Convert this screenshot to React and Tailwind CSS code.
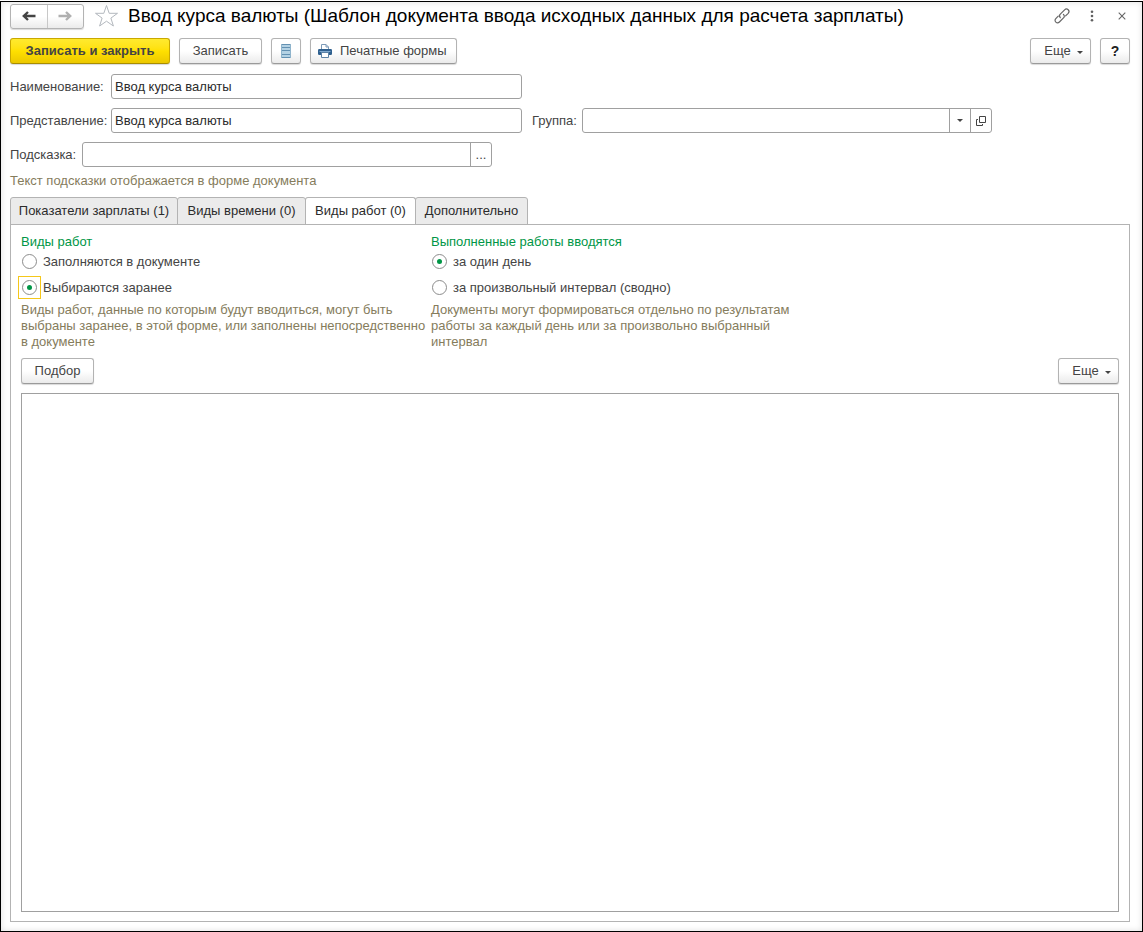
import { useState } from "react";

const BUTTON =
  "flex h-[26px] items-center rounded-[3px] border border-[#b3b3b3] border-b-[#9a9a9a] bg-linear-to-b from-white from-50% to-[#ebebeb] text-[#444444] shadow-[0_1px_1px_rgba(0,0,0,0.15)]";
const FIELD = "flex h-[25px] rounded-[3px] border border-[#a0a0a0] bg-white";
const INPUT = "min-w-0 flex-1 rounded-[3px] bg-transparent px-[3px] text-[#2b2b2b] outline-none";
const INNER_BUTTON = "flex w-[21px] items-center justify-center border-l border-[#a0a0a0] text-[#444444]";

function ArrowLeft({ className }) {
  return (
    <svg width="14" height="10" viewBox="0 0 14 10" className={className} aria-hidden="true">
      <path d="M13.5 5H3M6 1L1.8 5L6 9" fill="none" stroke="currentColor" strokeWidth="2.4" />
    </svg>
  );
}

function Caret({ className }) {
  return (
    <svg width="6" height="3" viewBox="0 0 6 3" className={className} aria-hidden="true">
      <path d="M0 0h6L3 3z" fill="currentColor" />
    </svg>
  );
}

function MoreButton() {
  return (
    <button type="button" className={`${BUTTON} w-[61px] justify-center gap-[6px] pl-[6px]`}>
      Еще
      <Caret className="mt-[2px]" />
    </button>
  );
}

function Radio({ name, label, checked, focused, onChange }) {
  return (
    <label className="mb-[3px] -ml-[3px] flex items-center gap-[2px]">
      <span
        className={`flex size-[23px] items-center justify-center border ${
          focused ? "border-[#f5c71a]" : "border-transparent"
        }`}
      >
        <input
          type="radio"
          name={name}
          checked={checked}
          onChange={onChange}
          className="flex size-[15px] appearance-none items-center justify-center rounded-full border border-[#8c8c8c] bg-white outline-none before:size-[5px] before:rounded-full checked:before:bg-[#009646]"
        />
      </span>
      {label}
    </label>
  );
}

function RadioGroup({ title, name, options, initial, focused, hint, className }) {
  const [value, setValue] = useState(initial);
  return (
    <fieldset className={className}>
      <legend className="text-[#009646]">{title}</legend>
      {options.map((option, i) => (
        <Radio
          key={option}
          name={name}
          label={option}
          checked={value === i}
          focused={focused && value === i}
          onChange={() => setValue(i)}
        />
      ))}
      <p className="text-[#857c5c]">{hint}</p>
    </fieldset>
  );
}

const TABS = [
  { label: "Показатели зарплаты (1)", width: "w-[168px]" },
  { label: "Виды времени (0)", width: "w-[129px]" },
  { label: "Виды работ (0)", width: "w-[111px]" },
  { label: "Дополнительно", width: "w-[113px]" },
];

export default function App() {
  const [tab, setTab] = useState(2);
  return (
    <div className="min-h-screen bg-white pt-px font-['Liberation_Sans',Arial,sans-serif] text-[13px] leading-4 text-[#444444]">
      <main className="flex min-h-[calc(100vh-1px)] flex-col border border-black pt-px pr-3 pb-[9px] pl-[9px] shadow-[inset_0_0_6px_rgba(0,0,0,0.12)]">
        <header className="flex h-[26px] items-center">
          <div className="flex h-[25px] w-[74px] rounded-[3px] border border-[#b3b3b3] bg-linear-to-b from-white from-50% to-[#ebebeb] shadow-[0_1px_1px_rgba(0,0,0,0.15)]">
            <button type="button" aria-label="Назад" className="flex flex-1 items-center justify-center border-r border-[#c8c8c8]">
              <ArrowLeft />
            </button>
            <button type="button" aria-label="Вперед" className="flex flex-1 items-center justify-center text-[#b0b0b0]">
              <ArrowLeft className="rotate-180" />
            </button>
          </div>
          <button type="button" aria-label="Избранное" className="ml-[10px]">
            <svg width="25" height="24" viewBox="0 0 25 24" aria-hidden="true">
              <path
                d="M12.5 1.5L15.2 9.3H23.5L16.9 14.1L19.4 22L12.5 17.2L5.6 22L8.1 14.1L1.5 9.3H9.8Z"
                fill="white"
                stroke="#b3b8be"
              />
            </svg>
          </button>
          <h1 className="ml-[9px] flex-1 text-[19px] leading-6 text-black">
            Ввод курса валюты (Шаблон документа ввода исходных данных для расчета зарплаты)
          </h1>
          <button type="button" aria-label="Ссылка" className="mr-[19px]">
            <svg width="18" height="18" viewBox="0 0 18 18" fill="none" stroke="#666666" strokeWidth="1.2" strokeLinecap="round" aria-hidden="true">
              <path d="M7.3 10.7C6.2 9.5 6.2 8.2 7.3 7.1L11.6 2.8C14 .5 17.5 3.8 15.2 6.3L12.6 8.9M10.4 7.3C11.6 8.5 11.6 9.8 10.5 10.9L6.4 15C4 17.4.5 14 2.8 11.6L5.2 9.2" />
            </svg>
          </button>
          <button type="button" aria-label="Меню" className="mr-6">
            <svg width="4" height="12" viewBox="0 0 4 12" fill="#606060" aria-hidden="true">
              <circle cx="2" cy="1.7" r="1.3" />
              <circle cx="2" cy="6" r="1.3" />
              <circle cx="2" cy="10.3" r="1.3" />
            </svg>
          </button>
          <button type="button" aria-label="Закрыть" className="mr-1">
            <svg width="8" height="8" viewBox="0 0 8 8" stroke="#666666" strokeWidth="1.1" aria-hidden="true">
              <path d="M.7 .7L7.3 7.3M7.3 .7L.7 7.3" />
            </svg>
          </button>
        </header>

        <div className="mt-[9px] flex gap-[9px]">
          <button
            type="button"
            className="flex h-[26px] w-[160px] items-center justify-center rounded-[3px] border border-[#c9a800] border-b-[#a98d00] bg-linear-to-b from-[#ffea2e] via-[#ffe000] to-[#ecc800] font-bold text-[#444444] shadow-[0_1px_1px_rgba(0,0,0,0.15)]"
          >
            Записать и закрыть
          </button>
          <button type="button" className={`${BUTTON} w-[83px] justify-center`}>
            Записать
          </button>
          <button type="button" aria-label="Список" className={`${BUTTON} w-[30px] justify-center`}>
            <svg width="10" height="14" viewBox="0 0 10 14" aria-hidden="true">
              <path d="M0 0h10v14H0z" fill="#b4d2e4" />
              <path d="M0 .5h10M0 3.5h10M0 6.5h10M0 10.5h10M0 13.5h10" stroke="#6391b2" />
              <path d="M.5 0v14M9.5 0v14" stroke="#8fb4cc" />
            </svg>
          </button>
          <button type="button" className={`${BUTTON} w-[147px] gap-2 pl-[7px]`}>
            <svg width="14" height="14" viewBox="0 0 14 14" aria-hidden="true">
              <path d="M3.5 6V.5H8L10.5 3V6" fill="white" stroke="#7d9ab8" />
              <path d="M8 .5V3h2.5" fill="none" stroke="#7d9ab8" />
              <rect y="5" width="14" height="6" rx="1.2" fill="#2f608f" />
              <path d="M1.5 7.5h11" stroke="#7fa8cf" />
              <path d="M3.5 8.5h7v5h-7z" fill="white" stroke="#5d82a6" />
            </svg>
            Печатные формы
          </button>
          <div className="ml-auto flex gap-[9px]">
            <MoreButton />
            <button type="button" className={`${BUTTON} w-[30px] justify-center`}>
              <span className="text-sm font-bold text-[#222222]">?</span>
            </button>
          </div>
        </div>

        <div className="mt-[10px] flex items-center">
          <label htmlFor="name" className="w-[101px]">
            Наименование:
          </label>
          <div className={`${FIELD} w-[411px]`}>
            <input id="name" defaultValue="Ввод курса валюты" className={INPUT} />
          </div>
        </div>

        <div className="mt-[9px] flex items-center">
          <label htmlFor="view" className="w-[101px]">
            Представление:
          </label>
          <div className={`${FIELD} w-[411px]`}>
            <input id="view" defaultValue="Ввод курса валюты" className={INPUT} />
          </div>
          <label htmlFor="group" className="ml-[10px] w-[50px]">
            Группа:
          </label>
          <div className={`${FIELD} w-[410px]`}>
            <input id="group" className={INPUT} />
            <button type="button" aria-label="Выбрать" className={INNER_BUTTON}>
              <Caret />
            </button>
            <button type="button" aria-label="Открыть" className={INNER_BUTTON}>
              <svg width="10" height="10" viewBox="0 0 10 10" fill="none" stroke="currentColor" aria-hidden="true">
                <path d="M3.5 .5h6v6h-6zM2 3.5H.5v6h6V8" />
              </svg>
            </button>
          </div>
        </div>

        <div className="mt-[9px] flex items-center">
          <label htmlFor="tip" className="w-[72px]">
            Подсказка:
          </label>
          <div className={`${FIELD} w-[410px]`}>
            <input id="tip" className={INPUT} />
            <button type="button" aria-label="Изменить" className={INNER_BUTTON}>
              ...
            </button>
          </div>
        </div>
        <p className="mt-[6px] text-[#857c5c]">Текст подсказки отображается в форме документа</p>

        <div role="tablist" className="mt-2 flex">
          {TABS.map(({ label, width }, i) => (
            <button
              key={label}
              type="button"
              role="tab"
              aria-selected={tab === i}
              onClick={() => setTab(i)}
              className={`-mb-px h-7 rounded-t-[3px] border border-[#b3b3b3] whitespace-nowrap text-[#2b2b2b] not-first:-ml-px ${width} ${
                tab === i ? "border-b-white bg-white" : "bg-[#ebebeb]"
              }`}
            >
              {label}
            </button>
          ))}
        </div>

        <section role="tabpanel" className="flex flex-1 flex-col border border-[#b3b3b3] px-[10px] pt-[9px] pb-[9px]">
          <div className="flex">
            <RadioGroup
              className="w-[410px]"
              title="Виды работ"
              name="kinds"
              options={["Заполняются в документе", "Выбираются заранее"]}
              initial={1}
              focused
              hint={
                <>
                  Виды работ, данные по которым будут вводиться, могут быть
                  <br />
                  выбраны заранее, в этой форме, или заполнены непосредственно
                  <br />в документе
                </>
              }
            />
            <RadioGroup
              className="w-[400px]"
              title="Выполненные работы вводятся"
              name="period"
              options={["за один день", "за произвольный интервал (сводно)"]}
              initial={0}
              hint={
                <>
                  Документы могут формироваться отдельно по результатам
                  <br />
                  работы за каждый день или за произвольно выбранный
                  <br />
                  интервал
                </>
              }
            />
          </div>
          <div className="mt-2 flex justify-between">
            <button type="button" className={`${BUTTON} w-[73px] justify-center`}>
              Подбор
            </button>
            <MoreButton />
          </div>
          <div role="listbox" aria-label="Виды работ" className="mt-[9px] flex-1 border border-[#a0a0a0] bg-white" />
        </section>
      </main>
    </div>
  );
}
